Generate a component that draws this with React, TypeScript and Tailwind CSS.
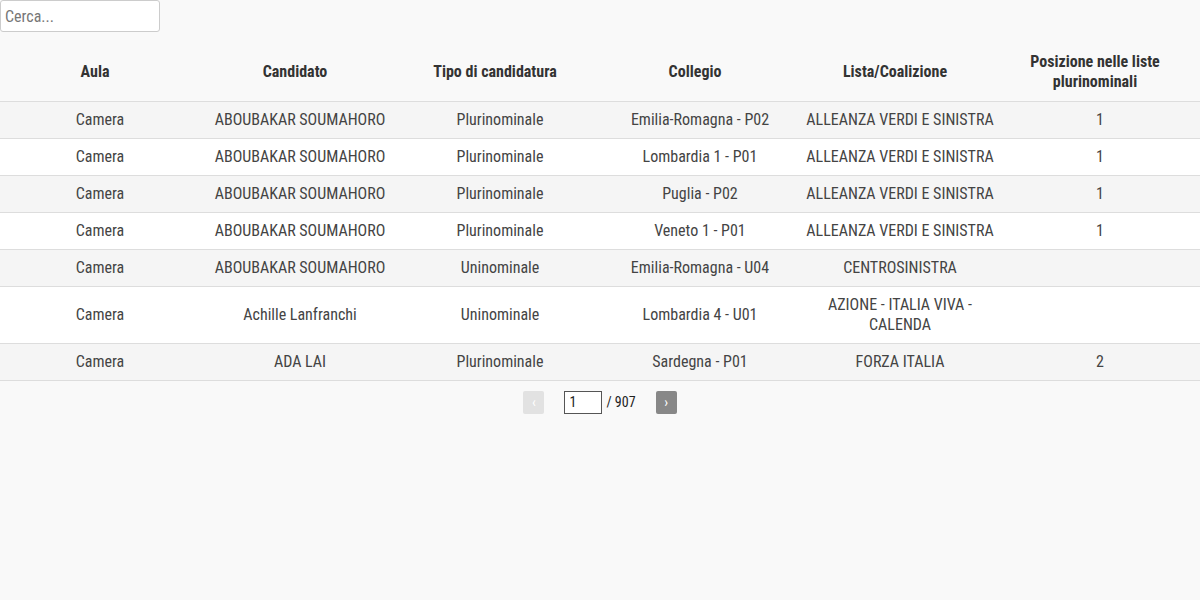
import React from "react";

const rows = [
  ["Camera", "ABOUBAKAR SOUMAHORO", "Plurinominale", "Emilia-Romagna - P02", "ALLEANZA VERDI E SINISTRA", "1"],
  ["Camera", "ABOUBAKAR SOUMAHORO", "Plurinominale", "Lombardia 1 - P01", "ALLEANZA VERDI E SINISTRA", "1"],
  ["Camera", "ABOUBAKAR SOUMAHORO", "Plurinominale", "Puglia - P02", "ALLEANZA VERDI E SINISTRA", "1"],
  ["Camera", "ABOUBAKAR SOUMAHORO", "Plurinominale", "Veneto 1 - P01", "ALLEANZA VERDI E SINISTRA", "1"],
  ["Camera", "ABOUBAKAR SOUMAHORO", "Uninominale", "Emilia-Romagna - U04", "CENTROSINISTRA", ""],
  ["Camera", "Achille Lanfranchi", "Uninominale", "Lombardia 4 - U01", "AZIONE - ITALIA VIVA - CALENDA", ""],
  ["Camera", "ADA LAI", "Plurinominale", "Sardegna - P01", "FORZA ITALIA", "2"],
];

const headers = ["Aula", "Candidato", "Tipo di candidatura", "Collegio", "Lista/Coalizione", "Posizione nelle liste plurinominali"];

export default function App() {
  return (
    <div
      className="min-h-[600px] w-[1200px] bg-[#f9f9f9] text-[#333]"
      style={{ fontFamily: '"Roboto Condensed", Roboto, "Liberation Sans", sans-serif', fontStretch: "condensed" }}
    >
      <input
        className="h-8 w-40 rounded-[3px] border border-[#ccc] bg-white px-1 text-base text-[#333] placeholder:text-[#777] outline-none"
        placeholder="Cerca..."
      />
      <table className="mt-3 w-full table-fixed border-collapse">
        <thead>
          <tr className="h-[57px] border-b border-[#ddd]">
            {headers.map((h) => (
              <th key={h} className="w-[200px] pl-[10px] pr-5 text-center text-base font-bold leading-5 text-[#333]">
                {h}
              </th>
            ))}
          </tr>
        </thead>
        <tbody>
          {rows.map((r, i) => (
            <tr key={i} className={`border-b border-[#ddd] ${i % 2 === 0 ? "bg-[#f5f5f5]" : "bg-white"}`}>
              {r.map((c, j) => (
                <td key={j} className="h-9 px-1 py-2 text-center text-base font-normal leading-5 text-[#444]">
                  {c}
                </td>
              ))}
            </tr>
          ))}
        </tbody>
      </table>
      <div className="mt-[10px] flex items-center justify-center">
        <button className="h-[23px] w-[21px] rounded-[2px] bg-[#e2e2e2] text-sm text-white">‹</button>
        <input
          className="ml-5 h-[23px] w-[38px] border border-[#555] bg-white px-1 text-sm text-[#222] outline-none"
          defaultValue="1"
        />
        <span className="ml-1 text-sm text-[#222]">/ 907</span>
        <button className="ml-5 h-[23px] w-[21px] rounded-[2px] bg-[#888] text-sm text-white">›</button>
      </div>
    </div>
  );
}
